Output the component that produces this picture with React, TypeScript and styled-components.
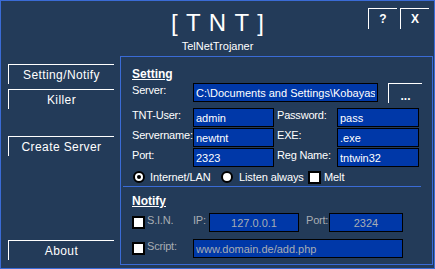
import { createGlobalStyle, styled } from 'styled-components';

const BG = '#233b59';
const LINE = '#3a6bd6';
const FIELD = '#0038a8';
const DIM = '#a8adb3';

const Global = createGlobalStyle`
  body {
    margin: 0;
    background: ${BG};
  }
`;

function App() {
  return (
    <Window>
      <Global />
      <Header>
        <span />
        <TitleBlock>
          <Title>[ T N T ]</Title>
          <Subtitle>TelNetTrojaner</Subtitle>
        </TitleBlock>
        <WinButtons>
          <WinButton>?</WinButton>
          <WinButton>X</WinButton>
        </WinButtons>
      </Header>
      <Body>
        <Sidebar>
          <NavButton>Setting/Notify</NavButton>
          <NavButton $mt={5}>Killer</NavButton>
          <NavButton $mt={27}>Create Server</NavButton>
          <NavButton $mt="auto">About</NavButton>
        </Sidebar>
        <Panel>
          <Heading>Setting</Heading>
          <Row $h={19} $mt={2}>
            <Label $w={61}>Server:</Label>
            <Field $w={185} readOnly value="C:\Documents and Settings\Kobayashi\Desktop\server.exe" />
            <BrowseButton>...</BrowseButton>
          </Row>
          <Row $h={19} $mt={6}>
            <Label $w={61}>TNT-User:</Label>
            <Field $w={81} readOnly value="admin" />
            <Label $w={60} $ml={3}>Password:</Label>
            <Field $w={82} readOnly value="pass" />
          </Row>
          <Row $h={19} $mt={1}>
            <Label $w={61}>Servername:</Label>
            <Field $w={81} readOnly value="newtnt" />
            <Label $w={60} $ml={3}>EXE:</Label>
            <Field $w={82} readOnly value=".exe" />
          </Row>
          <Row $h={19} $mt={1}>
            <Label $w={61}>Port:</Label>
            <Field $w={81} readOnly value="2323" />
            <Label $w={60} $ml={3}>Reg Name:</Label>
            <Field $w={82} readOnly value="tntwin32" />
          </Row>
          <Row $h={18} $mt={1} $center>
            <Option $w={88} $ml={1}>
              <Radio $checked />
              <OptionText $ml={5}>Internet/LAN</OptionText>
            </Option>
            <Option $w={87}>
              <Radio />
              <OptionText $ml={6}>Listen always</OptionText>
            </Option>
            <Option>
              <Check />
              <OptionText $ml={3}>Melt</OptionText>
            </Option>
          </Row>
          <Separator />
          <Heading $mt={7}>Notify</Heading>
          <Row $h={19} $mt={5} $center>
            <Check />
            <Label $w={46} $ml={2} $dim>S.I.N.</Label>
            <Label $w={16} $dim>IP:</Label>
            <Field $w={90} $align="center" $dim readOnly value="127.0.0.1" />
            <Label $w={23} $ml={7} $dim>Port:</Label>
            <Field $w={74} $align="center" $dim readOnly value="2324" />
          </Row>
          <Row $h={19} $mt={7} $center>
            <Check />
            <Label $w={46} $ml={2} $dim>Script:</Label>
            <Field $w={210} $dim readOnly value="www.domain.de/add.php" />
          </Row>
        </Panel>
      </Body>
    </Window>
  );
}

const Window = styled.div`
  width: 435px;
  height: 269px;
  box-sizing: border-box;
  border: 1px solid ${LINE};
  background: ${BG};
  display: flex;
  flex-direction: column;
  font-family: "Liberation Sans", Arial, sans-serif;
  color: #fff;
  overflow: hidden;
`;

const Header = styled.header`
  height: 55px;
  flex-shrink: 0;
  box-sizing: border-box;
  padding-top: 7px;
  display: grid;
  grid-template-columns: 1fr auto 1fr;
  align-items: start;
`;

const TitleBlock = styled.div`
  margin-top: 3px;
  text-align: center;
`;

const Title = styled.div`
  font-size: 24px;
  line-height: 24px;
  letter-spacing: 1px;
  white-space: pre;
  padding-left: 1px;
`;

const Subtitle = styled.div`
  margin-top: 5px;
  font-size: 11px;
  line-height: 12px;
`;

const WinButtons = styled.div`
  justify-self: end;
  display: flex;
  gap: 3px;
  padding-right: 5px;
`;

const WinButton = styled.button`
  width: 29px;
  height: 21px;
  box-sizing: border-box;
  padding: 0 0 1px;
  margin: 0;
  background: transparent;
  border: none;
  border-top: 1px solid #fff;
  border-left: 1px solid #fff;
  color: #fff;
  font-family: "Liberation Sans", Arial, sans-serif;
  font-size: 12px;
  font-weight: bold;
  display: flex;
  align-items: center;
  justify-content: center;
`;

const Body = styled.div`
  flex: 1;
  display: flex;
  min-height: 0;
`;

const Sidebar = styled.nav`
  width: 119px;
  flex-shrink: 0;
  box-sizing: border-box;
  padding: 8px 0 8px 7px;
  display: flex;
  flex-direction: column;
`;

const NavButton = styled.button<{ $mt?: number | 'auto' }>`
  width: 106px;
  height: 20px;
  box-sizing: border-box;
  margin: ${(p) => (p.$mt === 'auto' ? 'auto' : `${p.$mt ?? 0}px`)} 0 0;
  padding: 1px 0 0;
  background: transparent;
  border: none;
  border-top: 1px solid #fff;
  border-left: 1px solid #fff;
  color: #fff;
  font-family: "Liberation Sans", Arial, sans-serif;
  font-size: 12px;
  letter-spacing: 0.4px;
  line-height: 18px;
  text-align: center;
`;

const Panel = styled.section`
  width: 313px;
  height: 209px;
  flex-shrink: 0;
  box-sizing: border-box;
  border: 1px solid ${LINE};
  padding: 10px 0 0 11px;
  display: flex;
  flex-direction: column;
`;

const Heading = styled.div<{ $mt?: number }>`
  margin-top: ${(p) => p.$mt ?? 0}px;
  font-size: 12px;
  font-weight: bold;
  line-height: 14px;
  text-decoration: underline;
`;

const Row = styled.div<{ $h: number; $mt?: number; $center?: boolean }>`
  display: flex;
  align-items: ${(p) => (p.$center ? 'center' : 'flex-start')};
  height: ${(p) => p.$h}px;
  margin-top: ${(p) => p.$mt ?? 0}px;
  flex-shrink: 0;
`;

const Label = styled.span<{ $w: number; $ml?: number; $dim?: boolean }>`
  width: ${(p) => p.$w}px;
  margin-left: ${(p) => p.$ml ?? 0}px;
  flex-shrink: 0;
  align-self: flex-start;
  font-size: 11px;
  line-height: 15px;
  letter-spacing: -0.2px;
  white-space: nowrap;
  color: ${(p) => (p.$dim ? DIM : '#fff')};
`;

const Field = styled.input<{ $w: number; $align?: string; $dim?: boolean }>`
  width: ${(p) => p.$w}px;
  height: 19px;
  flex-shrink: 0;
  box-sizing: border-box;
  margin: 0;
  padding: 0 2px;
  border: 1px solid #000;
  background: ${FIELD};
  color: ${(p) => (p.$dim ? DIM : '#fff')};
  font-family: "Liberation Sans", Arial, sans-serif;
  font-size: 11px;
  text-align: ${(p) => p.$align ?? 'left'};
  outline: none;
`;

const BrowseButton = styled.button`
  width: 34px;
  height: 20px;
  margin: 0 0 0 10px;
  padding: 4px 0 0;
  box-sizing: border-box;
  background: transparent;
  border: none;
  border-top: 1px solid #fff;
  border-left: 1px solid #fff;
  color: #fff;
  font-family: "Liberation Sans", Arial, sans-serif;
  font-size: 12px;
  font-weight: bold;
  line-height: 12px;
  text-align: center;
`;

const Option = styled.label<{ $w?: number; $ml?: number }>`
  display: flex;
  align-items: center;
  width: ${(p) => (p.$w ? `${p.$w}px` : 'auto')};
  margin-left: ${(p) => p.$ml ?? 0}px;
  flex-shrink: 0;
`;

const OptionText = styled.span<{ $ml: number }>`
  margin-left: ${(p) => p.$ml}px;
  font-size: 11px;
  line-height: 15px;
  letter-spacing: -0.1px;
  white-space: nowrap;
`;

const Radio = styled.span<{ $checked?: boolean }>`
  position: relative;
  width: 12px;
  height: 12px;
  box-sizing: border-box;
  border: 2px solid #000;
  border-radius: 50%;
  background: #fff;
  flex-shrink: 0;

  &::after {
    content: '';
    display: ${(p) => (p.$checked ? 'block' : 'none')};
    position: absolute;
    left: 2px;
    top: 2px;
    width: 4px;
    height: 4px;
    border-radius: 50%;
    background: #000;
  }
`;

const Check = styled.span`
  width: 13px;
  height: 13px;
  box-sizing: border-box;
  border: 2px solid #000;
  background: #fff;
  flex-shrink: 0;
`;

const Separator = styled.div`
  width: 298px;
  height: 1px;
  margin-left: -9px;
  background: ${LINE};
  flex-shrink: 0;
`;

export default App;
